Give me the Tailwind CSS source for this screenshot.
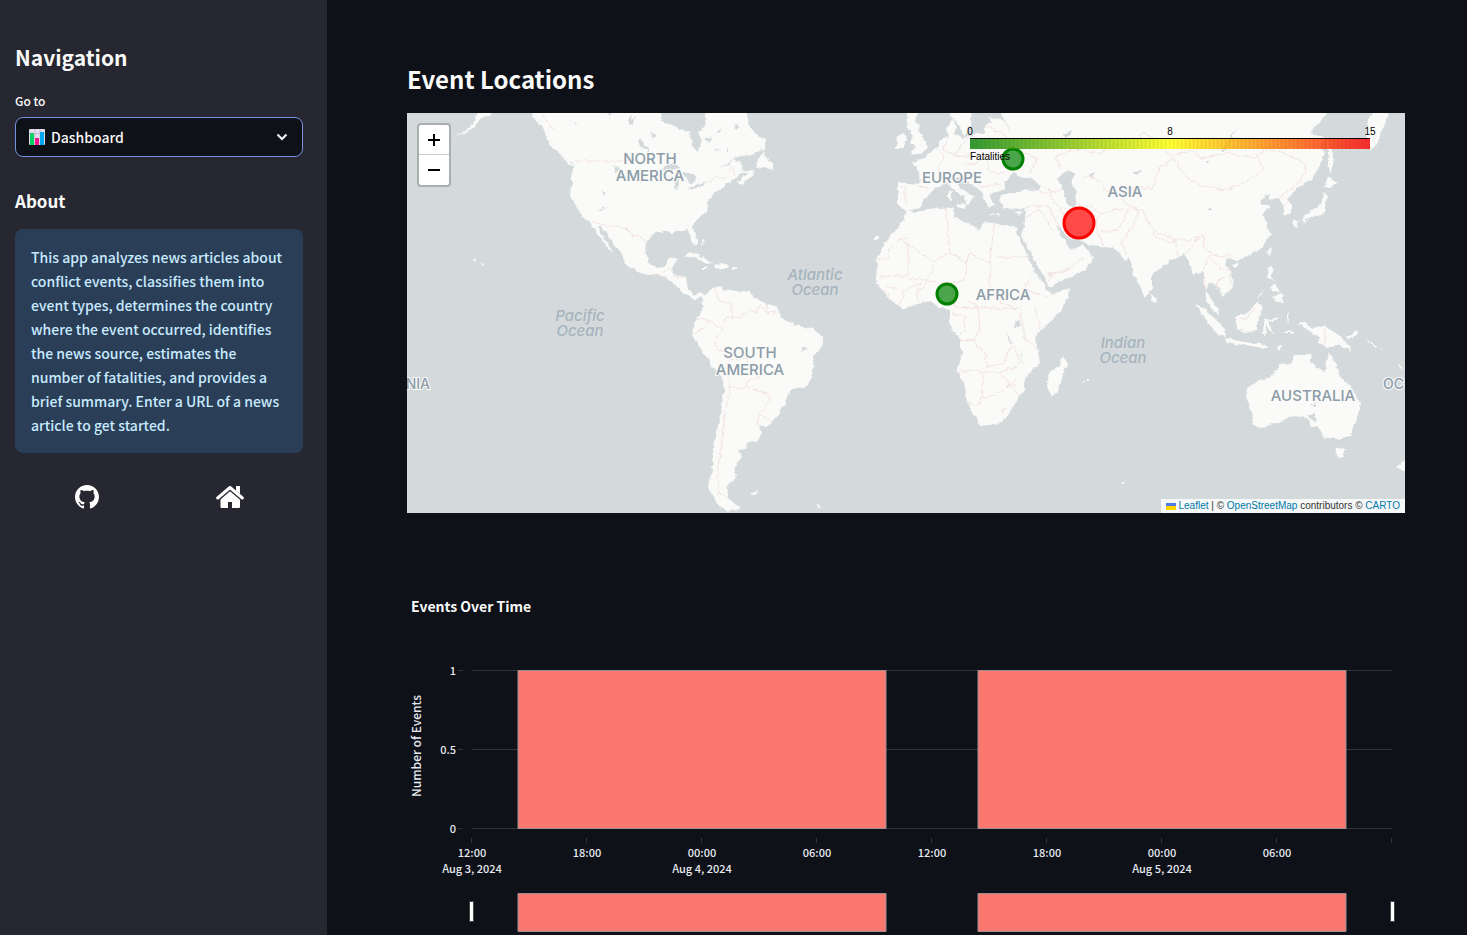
<!DOCTYPE html>
<html lang="en">
<head>
<meta charset="utf-8">
<title>Event Dashboard</title>
<script src="https://cdn.jsdelivr.net/npm/@tailwindcss/browser@4"></script>
</head>
<body class="flex h-screen overflow-hidden bg-[#0e1117] font-['Noto_Sans_CJK_SC','Noto_Sans',sans-serif] text-[14px] font-medium text-[#fafafa]">

<aside class="flex w-[327px] shrink-0 flex-col bg-[#262730] pl-[15px] pr-6 pt-[39px]">
  <h2 class="text-[21px] leading-9 font-semibold">Navigation</h2>
  <label for="page" class="mt-[17px] text-[12px] leading-[18px]">Go to</label>
  <div class="relative mt-[7px]">
    <select id="page" class="h-10 w-full appearance-none rounded-lg border border-[#7792e3] bg-[#0e1117] pl-[35px] text-[14px] text-[#fafafa] outline-none">
      <option>Dashboard</option>
    </select>
    <svg class="pointer-events-none absolute left-[14px] top-3 size-4" viewBox="0 0 16 16" aria-hidden="true">
      <rect width="16" height="16" rx="1" fill="#e3dced"/>
      <path d="M0 4.500H16M6 0V16M11 0V16" stroke="#c9bcd8"/>
      <rect x="1" y="4" width="4" height="12" fill="#00cf64"/>
      <rect x="6" y="9" width="4" height="7" fill="#f3128e"/>
      <rect x="11" y="3" width="4" height="13" fill="#04a7ef"/>
    </svg>
    <svg class="pointer-events-none absolute right-[15px] top-[15px] h-2.5 w-3" viewBox="0 0 12 10" aria-hidden="true">
      <path d="M1.500 2.500L6 7L10.500 2.500" fill="none" stroke="#fafafa" stroke-width="2"/>
    </svg>
  </div>
  <h3 class="mt-[30px] text-[17px] leading-7 font-semibold">About</h3>
  <p class="mt-3.5 rounded-lg bg-[#2b3e57] py-4 pl-4 pr-5 leading-6 text-[#c7ebff]">This app analyzes news articles about conflict events, classifies them into event types, determines the country where the event occurred, identifies the news source, estimates the number of fatalities, and provides a brief summary. Enter a URL of a news article to get started.</p>
  <nav class="mt-8 grid grid-cols-2 pr-0.5">
    <a href="#github" aria-label="GitHub" class="flex justify-center">
      <svg class="size-6" viewBox="0 0 16 16" fill="#fff"><path d="M8 0C3.580 0 0 3.580 0 8c0 3.540 2.290 6.530 5.470 7.590.4.070.55-.17.55-.38 0-.19-.01-.82-.01-1.490-2.010.37-2.530-.49-2.690-.94-.09-.23-.48-.94-.82-1.130-.28-.15-.68-.52-.01-.53.63-.01 1.080.58 1.230.82.72 1.210 1.870.87 2.330.66.070-.52.280-.87.510-1.070-1.780-.2-3.640-.89-3.640-3.950 0-.87.31-1.590.82-2.150-.08-.2-.36-1.020.080-2.120 0 0 .67-.21 2.200.82.640-.18 1.320-.27 2-.27.680 0 1.360.090 2 .27 1.530-1.040 2.200-.82 2.200-.82.440 1.100.16 1.920.080 2.120.51.560.82 1.270.82 2.150 0 3.070-1.870 3.750-3.650 3.950.29.250.54.730.54 1.480 0 1.070-.01 1.930-.01 2.200 0 .21.15.46.55.38A8.013 8.013 0 0016 8c0-4.420-3.580-8-8-8z"/></svg>
    </a>
    <a href="#home" aria-label="Home" class="flex justify-center">
      <svg class="h-6 w-7" viewBox="0 0 28 24" fill="#fff"><path d="M1.700 13L14 2.500L26.300 13" fill="none" stroke="#fff" stroke-width="3" stroke-linecap="round" stroke-linejoin="round"/><path d="M20 1h4v8l-4-3.500z"/><path d="M14 6.200L24 14.800V22Q24 23 23 23H16V17H12V23H5.500Q4.500 23 4.500 22V14.500z"/></svg>
    </a>
  </nav>
</aside>

<main class="min-w-0 flex-1 overflow-hidden pl-20 pr-[62px] pt-[59px]">
  <h1 class="text-[24px] leading-10 font-semibold">Event Locations</h1>

  <section aria-label="Event map" class="relative mt-3.5 h-[400px] overflow-hidden bg-[#d4dadc] font-['Liberation_Sans',sans-serif] font-normal">
    <svg class="size-full" viewBox="407 113 998 400" preserveAspectRatio="xMidYMid slice">
      <defs>
        <filter id="coast" x="0" y="0" width="1" height="1"><feTurbulence type="fractalNoise" baseFrequency="0.16" numOctaves="3" seed="4"/><feDisplacementMap in="SourceGraphic" scale="5" xChannelSelector="R" yChannelSelector="G"/></filter>
        <linearGradient id="ramp"><stop stop-color="#008000"/><stop offset=".5" stop-color="#ff0"/><stop offset="1" stop-color="#f00"/></linearGradient>
        <pattern id="ticks" width="8" height="10" patternUnits="userSpaceOnUse" x="970"><path d="M3.500 0V10M7.500 0V10" stroke="#000" stroke-opacity=".07"/></pattern>
      </defs>
      <g filter="url(#coast)">
        <path fill="none" d="M380 90H1430V540H380z"/>
        <g fill="#fafaf8">
          <path d="M526 100L532 113L536 121L543 128L546 134L550 145L560 154L568 159L574 164L573 168L571 172L572 183L571 197L577 208L582 216L590 222L597 233L605 243L612 254L611 247L603 237L598 227L602 227L608 237L617 247L623 257L625 263L638 272L648 275L657 274L667 279L675 285L683 293L695 300L701 296L704 300L706 296L700 292L694 295L688 290L686 277L673 274L672 268L677 258L668 259L663 267L657 268L648 262L646 250L648 240L655 233L667 231L672 233L682 231L688 230L691 238L695 247L697 242L693 228L694 222L707 212L708 202L715 192L723 188L728 183L737 178L742 173L748 173L741 180L736 181L741 184L755 174L752 170L744 172L741 165L735 159L720 170L730 161L740 156L752 155L765 148L765 140L753 131L748 123L746 100z"/>
          <path d="M763 150L757 163L755 168L765 167L773 171L773 163L765 158zM454 137L465 131L472 124L480 110H492L489 116L481 118L476 126L466 132zM546 136L550 139L551 146L547 141zM560 154L569 160L574 167L568 164z"/>
          <path d="M702 302L710 290L720 286L723 289L737 291L750 292L755 298L765 303L777 307L782 318L795 325L812 329L824 337L823 345L814 357L813 372L807 386L793 389L786 397L785 405L775 418L768 427L758 425L762 433L757 441L747 442L746 449L739 450L742 457L733 468L737 475L727 488L728 498L740 508L728 512L715 502L709 487L713 463L715 437L720 417L724 390L723 377L712 367L707 358L693 337L693 327L698 317L704 307z"/>
          <path d="M683 256L690 252L698 255L704 258L713 263L706 264L697 258zM715 264L722 263L729 267L726 269L714 268zM702 267H707V269H702zM732 267H737V269H732zM480 262L484 264L482 267zM474 259H477V261H474zM751 493L759 491L755 495zM816 503L823 509L818 507zM702 238L704 244L702 246z"/>
          <path d="M907 210L915 212L927 209L950 207L954 208L955 217L967 223L980 230L983 222L993 223L1007 226L1018 228L1017 233L1023 245L1030 262L1035 272L1048 290L1052 295L1069 287L1068 298L1060 312L1040 330L1036 337L1037 347L1040 363L1025 377L1024 390L1017 400L1008 415L1002 423L980 426L975 417L968 403L964 383L957 372L962 353L960 340L950 325L950 310L940 308L932 302L902 308L888 298L876 282L877 260L885 243L895 232L903 220z"/>
          <path d="M1064 356L1067 364L1057 393L1051 395L1047 387L1050 370L1059 366z"/>
          <path d="M898 183L920 185L919 172L912 163L925 158L937 148L943 138L949 137L947 128L953 119L956 126L954 134L962 138L970 136L983 133L985 125L993 123L989 118L1004 120L1000 110V95H1335L1327 113L1310 133L1323 137L1323 158L1313 180L1300 186L1288 197L1287 201L1292 205L1292 213L1284 217L1282 202L1277 198L1270 200L1270 193L1259 202L1263 206L1272 205L1263 213L1268 228L1270 235L1262 248L1247 257L1237 260L1230 258L1225 263L1233 278L1234 287L1223 296L1220 288L1210 282L1208 287L1206 292L1212 300L1217 308L1220 316L1212 310L1206 299L1205 278L1202 272L1193 275L1190 262L1183 255L1172 260L1152 275L1152 288L1145 298L1133 272L1130 258L1125 260L1113 247L1088 245L1083 240L1070 238L1061 229L1056 226L1062 238L1072 250L1083 245L1088 251L1094 257L1086 269L1073 276L1049 287L1042 272L1030 252L1022 236L1025 220L1026 208L1003 209L999 199L1002 195L1023 190L1040 192L1042 186L1030 178L1024 178L1012 173L1005 182L1004 190L993 193L988 195L995 205L988 207L982 193L977 188L960 177L952 177L960 188L975 197L968 205L963 197L947 183L937 187L923 200L920 207L907 211L898 205z"/>
          <path d="M908 110H919L914 121L920 125L918 132L928 147L923 152L910 154L916 147L910 143L913 135L907 128zM896 137L905 132L907 140L903 148L896 148zM948 105H974L970 125L965 136L960 128L957 121L950 118zM1023 174L1032 173L1026 178zM957 205L967 204L965 209L957 207zM948 191L952 190V200L948 199zM990 214L1000 214V216L990 215zM1016 212L1022 210L1019 215z"/>
          <path d="M1328 177L1338 183L1330 188L1323 187zM1323 192L1327 195L1325 212L1313 217L1300 220L1312 210L1320 205zM1292 220L1299 220L1297 228L1293 225zM1301 220H1308L1304 223zM1328 137L1333 155L1331 174L1328 165zM1368 120L1377 105H1390L1385 125L1372 152L1366 135zM1339 182L1352 173L1341 181zM1266 252L1271 247L1269 256zM1232 265L1238 262L1236 268zM1267 268L1273 267L1271 277L1276 283L1268 278zM1272 297L1282 293L1283 303L1275 300zM1270 286L1275 285L1280 291L1273 291zM1257 298L1264 290L1260 297zM1152 293L1157 298L1155 304L1151 302z"/>
          <path d="M1195 305L1203 308L1225 328L1226 337L1218 335L1205 318zM1225 338L1245 342L1267 345L1267 348L1247 346L1227 342zM1235 317L1247 313L1257 302L1263 307L1258 315L1257 330L1245 332L1237 328zM1264 320L1280 317L1276 320L1268 320L1269 324L1274 335L1269 330L1266 325L1266 336L1263 333zM1298 323L1305 323L1312 328L1323 326L1337 333L1343 340L1352 351L1338 345L1327 347L1318 343L1320 337L1310 332zM1346 337L1357 330L1358 334L1349 339zM1277 347L1284 345L1278 351zM1287 315L1290 312L1288 323zM1284 331H1294V333H1284zM1364 338L1372 343L1383 350L1375 347zM1398 363L1402 369L1398 367z"/>
          <path d="M1248 387L1257 382L1272 377L1280 363L1290 365L1295 355L1312 355L1310 362L1325 372L1329 352L1335 363L1340 377L1352 388L1360 403L1358 417L1350 436L1337 439L1323 437L1320 428L1312 427L1307 418L1292 416L1280 422L1258 428L1251 423L1253 417L1247 397zM1335 449L1346 448L1343 457L1338 458zM1397 467L1405 459H1412V472L1399 469zM1119 482L1125 482L1123 484zM875 237H880V239H875zM1082 381H1084V383H1082zM1087 379H1089V381H1087z"/>
        </g>
        <g fill="#d4dadc">
          <path d="M660 105L662 121L673 126L690 133L692 145L698 151L702 141L698 133L705 126L706 120L703 105zM662 169L668 165L673 163L682 170L673 169L664 172zM674 182L680 175L677 190L674 188zM683 173L693 173L696 181L689 184L686 178zM687 189L699 184L709 180L700 187L691 191zM637 140L640 138L650 152L644 149zM630 115L634 125L628 124zM578 125L575 122L569 120zM613 166L622 169L615 171z"/>
          <path d="M606 114L612 112L609 117zM632 121L636 116L634 123zM650 133L657 135L651 137zM703 139L712 137L708 142zM717 131L723 129L719 133zM735 124L741 126L736 129zM727 150L729 148L729 153zM714 148L720 150L715 150zM602 191L606 193L604 195zM598 209L608 207L601 211z"/>
          <path d="M1058 178L1067 170L1076 173L1070 182L1077 192L1075 207L1067 205L1064 192zM1015 323L1021 320L1020 327L1014 328zM1007 332L1013 345L1009 342zM1021 349L1024 363L1022 360zM1221 151L1235 129L1228 149zM1133 171L1144 170L1136 175zM1088 176L1095 172L1092 178zM1310 405L1316 402L1315 406zM1309 415L1315 414L1316 424L1311 420zM923 300L925 307L922 303zM801 347L808 348L801 353zM1062 134L1074 130L1067 137zM1207 161H1210V163H1207zM1209 208H1212V210H1209z"/>
        </g>
        <g fill="none" stroke="#f3e2e3">
          <path d="M575 161H631M592 222L613 227L625 228L632 235L640 236L647 244M708 183L718 176L724 178L732 166L735 176M539 110L547 122L554 130M662 277L667 269L672 268M673 276L686 277M715 288L719 301L731 304L733 317L740 318L749 310L755 313L760 305L766 313L774 311M695 319L710 320L722 330L726 317L733 317M694 334L704 328L711 320M723 330L714 340L717 349L727 352L730 360L745 358L752 367L760 377L747 381L748 389L767 393L770 401L759 414L773 421M759 414L757 425M728 385L731 388L746 388M728 377L730 394L725 410L722 440L718 466L718 493L728 498M767 303V313M777 308L774 314M651 275L668 279"/>
          <path d="M876 259H888L890 249L900 239L908 238M908 243V276L880 276M900 239L934 262L950 252L945 207M950 252L967 263L969 253L990 263L994 223M995 257H1028M990 263V285L997 301L1020 309M967 263L964 280L949 284L928 281L915 285L905 290L900 305M935 265L927 280L910 279M918 303V289L929 283M949 284L956 308L978 307L980 330L975 340H958M967 300L978 307L1004 309L1020 308L1025 340L1040 350M958 340H972L986 354L986 368L1005 362L1010 345M957 371L1000 372L1010 367M984 373L980 405H975L968 403M980 398L995 395L1017 380M1000 372L1010 385L1019 395M1007 308L1025 289L1045 297L1053 295M1012 385H1018M1035 309L1040 328M1030 274L1025 289M1007 350L1015 347L1020 364L1010 370M952 313L965 316V330L958 336M1001 411L1006 407L1002 413M900 290L886 286M889 300V294L880 289"/>
          <path d="M937 148L944 155L938 168L943 178L948 183M946 140L943 150L955 155L962 145L970 137M955 155L965 157L975 153L987 158L990 172L1004 174M962 164L975 164L985 155M900 188L905 187V205M919 186L930 188M960 176L974 176L980 187L1000 184M985 133L1001 145L988 158M985 127L1004 133L1015 149L1038 159L1028 174M1004 120L1011 133M1030 188L1048 195L1060 207L1063 215M1026 206H1048L1060 228M1026 218L1040 208L1049 226L1060 232M1047 285L1050 275L1068 270L1082 258M1047 275L1070 268M1050 192L1062 190M1060 167L1055 157L1075 148L1100 153L1115 145L1135 143L1145 132L1173 157L1190 150L1201 158L1225 153L1255 158L1265 150L1290 155L1306 164L1304 176L1297 185L1278 198M1173 158L1184 175L1200 185L1225 190L1243 183L1264 170L1256 153M1173 158L1159 168L1153 188L1130 188L1120 198L1130 206L1143 210L1148 222L1155 231L1175 240L1190 240L1203 235L1205 250L1220 257L1232 255M1082 179L1094 176L1108 192L1120 196M1077 205L1092 207L1100 214L1125 208M1098 215L1097 230L1103 245M1101 232L1118 230L1130 208L1138 210L1135 223L1122 242L1126 255M1152 231L1155 237L1174 243M1175 238L1178 258M1185 254L1200 236M1203 270L1210 255L1220 268L1228 270L1232 284M1218 291L1215 282L1226 278M1205 290L1204 275M1236 320L1247 318L1256 308M1325 329V346M1283 206L1290 202M1043 187L1056 193"/>
        </g>
      </g>
      <g fill="#8c9ca8" stroke="#fafaf8" stroke-width="2" paint-order="stroke" text-anchor="middle" class="font-['Inter',sans-serif] text-[15px] font-medium">
        <text x="650" y="164">NORTH</text><text x="650" y="181">AMERICA</text>
        <text x="750" y="358">SOUTH</text><text x="750" y="375">AMERICA</text>
        <text x="952" y="183">EUROPE</text><text x="1125" y="197">ASIA</text>
        <text x="1003" y="300">AFRICA</text><text x="1313" y="401">AUSTRALIA</text>
        <text x="1383" y="389" text-anchor="start" class="text-[14px]">OC</text><text x="430" y="389" text-anchor="end" class="text-[14px]">NIA</text>
      </g>
      <g fill="#a7b4bc" text-anchor="middle" class="font-['Inter',sans-serif] text-[15px] font-medium italic">
        <text x="815" y="280">Atlantic</text><text x="815" y="295">Ocean</text>
        <text x="580" y="321">Pacific</text><text x="580" y="336">Ocean</text>
        <text x="1123" y="348">Indian</text><text x="1123" y="363">Ocean</text>
      </g>
      <g stroke-width="3" fill-opacity=".7">
        <circle cx="1013" cy="159" r="10" fill="#008000" stroke="#008000"/>
        <circle cx="947" cy="294" r="10" fill="#008000" stroke="#008000"/>
        <circle cx="1079" cy="223" r="15" fill="#f00" stroke="#f00"/>
      </g>
      <rect x="970" y="139" width="400" height="10" fill="url(#ramp)" opacity=".8"/>
      <rect x="970" y="139" width="400" height="10" fill="url(#ticks)"/>
      <path d="M970 138.500H1370" stroke="#000"/>
      <g text-anchor="middle" class="text-[10px]"><text x="970" y="135">0</text><text x="1170" y="135">8</text><text x="1370" y="135">15</text><text x="970" y="160" text-anchor="start">Fatalities</text></g>
    </svg>
    <div class="absolute left-2.5 top-2.5 w-[34px] overflow-hidden rounded border-2 border-black/20 bg-white bg-clip-padding">
      <button type="button" aria-label="Zoom in" class="flex h-[30px] w-full items-center justify-center border-b border-[#ccc]"><svg class="size-3" viewBox="0 0 12 12"><path d="M6 0V12M0 6H12" stroke="#000" stroke-width="2"/></svg></button>
      <button type="button" aria-label="Zoom out" class="flex h-[30px] w-full items-center justify-center"><svg class="size-3" viewBox="0 0 12 12"><path d="M0 6H12" stroke="#000" stroke-width="2"/></svg></button>
    </div>
    <div class="absolute bottom-0 right-0 flex items-center gap-0.5 bg-white/80 px-[5px] text-[10px] leading-[14px] text-[#333]">
      <svg class="h-[7px] w-2.5" viewBox="0 0 10 7"><path fill="#4c7be1" d="M0 0h10v4H0z"/><path fill="#ffd500" d="M0 3h10v4H0z"/></svg>
      <p><a href="#leaflet" class="text-[#0078a8]">Leaflet</a> | © <a href="#osm" class="text-[#0078a8]">OpenStreetMap</a> contributors © <a href="#carto" class="text-[#0078a8]">CARTO</a></p>
    </div>
  </section>

  <section aria-label="Events Over Time" class="mt-[77px]">
    <svg class="w-full text-[11px]" viewBox="0 0 998 360" fill="#e6eaf1">
      <text x="4" y="22" fill="#fafafa" class="text-[14px] font-bold">Events Over Time</text>
      <text transform="translate(14 156) rotate(-90)" text-anchor="middle" class="text-[12px]">Number of Events</text>
      <path d="M65 80.500H985M65 159.500H985M65 238.500H985M51 80.500H56M51 159.500H56M51 238.500H56M64.500 248V253M179.500 248V253M294.500 248V253M409.500 248V253M524.500 248V253M639.500 248V253M754.500 248V253M869.500 248V253M984.500 248V253" stroke="#31333f"/>
      <g fill="#fa786f" stroke="#9b8f90">
        <path d="M111 80.500H479V238.500H111zM571 80.500H939V238.500H571z"/>
        <path d="M111 303.500H479V341.500H111zM571 303.500H939V341.500H571z"/>
      </g>
      <g fill="#fff" stroke="#444"><path d="M62.500 311.500H66.500V331.500H62.500zM983.500 311.500H987.500V331.500H983.500z"/></g>
      <g text-anchor="end"><text x="49" y="85">1</text><text x="49" y="164">0.5</text><text x="49" y="243">0</text></g>
      <g text-anchor="middle">
        <text x="65" y="267">12:00</text><text x="180" y="267">18:00</text><text x="295" y="267">00:00</text><text x="410" y="267">06:00</text><text x="525" y="267">12:00</text><text x="640" y="267">18:00</text><text x="755" y="267">00:00</text><text x="870" y="267">06:00</text>
        <text x="65" y="283">Aug 3, 2024</text><text x="295" y="283">Aug 4, 2024</text><text x="755" y="283">Aug 5, 2024</text>
      </g>
    </svg>
  </section>
</main>
</body>
</html>
